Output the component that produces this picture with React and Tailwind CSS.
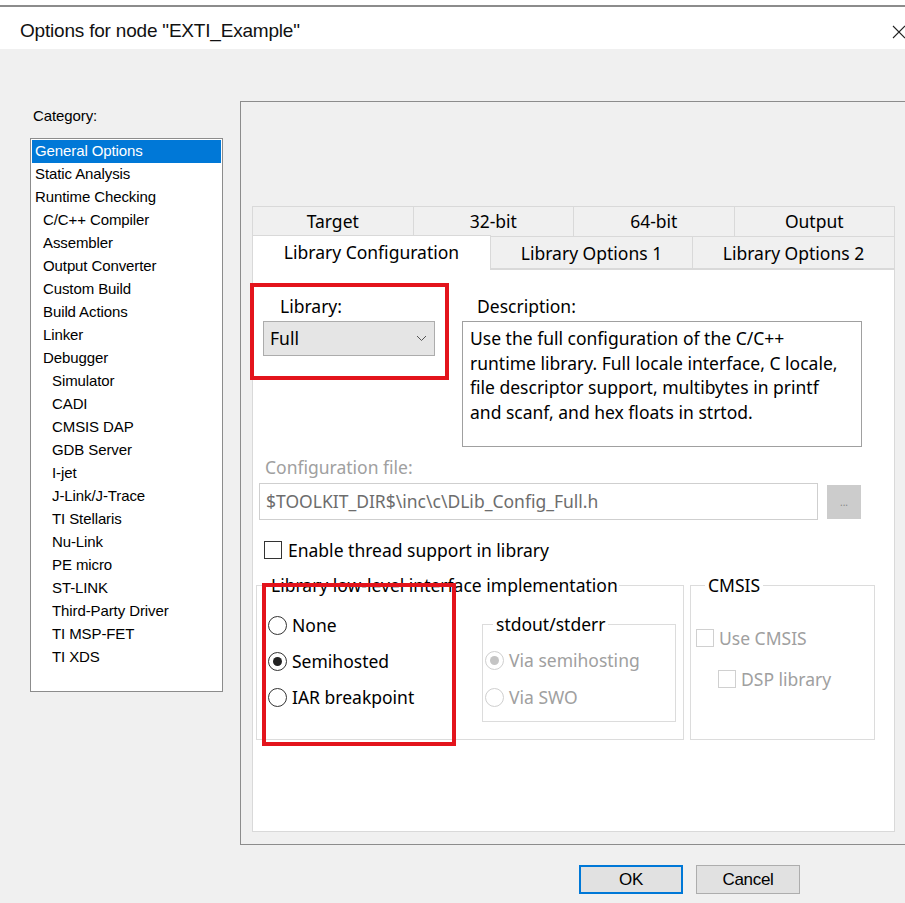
import React from "react";

// Category tree shown in the left list box (level = indent depth)
const categories = [
  { label: "General Options", level: 0, selected: true },
  { label: "Static Analysis", level: 0 },
  { label: "Runtime Checking", level: 0 },
  { label: "C/C++ Compiler", level: 1 },
  { label: "Assembler", level: 1 },
  { label: "Output Converter", level: 1 },
  { label: "Custom Build", level: 1 },
  { label: "Build Actions", level: 1 },
  { label: "Linker", level: 1 },
  { label: "Debugger", level: 1 },
  { label: "Simulator", level: 2 },
  { label: "CADI", level: 2 },
  { label: "CMSIS DAP", level: 2 },
  { label: "GDB Server", level: 2 },
  { label: "I-jet", level: 2 },
  { label: "J-Link/J-Trace", level: 2 },
  { label: "TI Stellaris", level: 2 },
  { label: "Nu-Link", level: 2 },
  { label: "PE micro", level: 2 },
  { label: "ST-LINK", level: 2 },
  { label: "Third-Party Driver", level: 2 },
  { label: "TI MSP-FET", level: 2 },
  { label: "TI XDS", level: 2 },
];

const indent = ["pl-[3px]", "pl-[11px]", "pl-[20px]"];

const topTabs = ["Target", "32-bit", "64-bit", "Output"];

const Radio = ({ checked, disabled }) => (
  <span
    className={`flex h-[19px] w-[19px] shrink-0 items-center justify-center rounded-full border bg-white ${
      disabled ? "border-[#cfcfcf]" : "border-[#333]"
    }`}
  >
    {checked && (
      <span
        className={`h-[9px] w-[9px] rounded-full ${disabled ? "bg-[#c4c4c4]" : "bg-[#222]"}`}
      />
    )}
  </span>
);

const Checkbox = ({ disabled }) => (
  <span
    className={`h-[18px] w-[18px] shrink-0 border bg-white ${
      disabled ? "border-[#d0d0d0]" : "border-[#333]"
    }`}
  />
);

export default function App() {
  return (
    <div className="flex h-[903px] w-[905px] flex-col overflow-hidden bg-[#f0f0f0] font-['Noto_Sans',sans-serif] text-[17.5px] text-black">
      {/* title bar */}
      <div className="h-[5px] bg-white" />
      <div className="flex h-[44px] items-center justify-between border-t-2 border-[#8c8c8c] bg-white pl-[20px] pt-[7px]">
        <span className="font-['Liberation_Sans',sans-serif] text-[19px] tracking-[-0.2px] text-[#111]">
          Options for node "EXTI_Example"
        </span>
        <svg width="16" height="16" viewBox="0 0 16 16" className="-mr-[2px]">
          <path d="M2 2 L14 14 M14 2 L2 14" stroke="#222" strokeWidth="1.1" fill="none" />
        </svg>
      </div>

      <div className="flex flex-1 pl-[30px]">
        {/* category list */}
        <div className="flex w-[193px] shrink-0 flex-col font-['Liberation_Sans',sans-serif] text-[15px] tracking-[-0.1px]">
          <div className="mt-[58px] pl-[3px] leading-[18px]">Category:</div>
          <div className="mt-[13px] h-[554px] border border-[#8c8c8c] bg-white px-[1px] pt-[1px]">
            {categories.map((c) => (
              <div
                key={c.label}
                className={`h-[23px] leading-[22px] ${indent[c.level]} ${
                  c.selected ? "bg-[#0078d7] text-white" : "text-black"
                }`}
              >
                {c.label}
              </div>
            ))}
          </div>
        </div>

        <div className="ml-[17px] flex flex-1 flex-col">
          {/* options frame */}
          <div className="mt-[52px] flex h-[744px] flex-col border border-r-0 border-[#8c8c8c] pl-[11px] pt-[104px]">
            <div className="flex w-[643px] flex-col">
              <div className="flex h-[31px]">
                {topTabs.map((t) => (
                  <div
                    key={t}
                    className="flex flex-1 items-center justify-center border border-l-0 border-[#d9d9d9] first:border-l"
                  >
                    {t}
                  </div>
                ))}
              </div>
              <div className="relative z-10 flex h-[32px] items-stretch">
                <div className="-mt-[2px] mb-[-1px] flex w-[239px] items-center justify-center border border-b-0 border-[#d9d9d9] bg-white pb-[2px]">
                  Library Configuration
                </div>
                <div className="flex w-[202px] items-center justify-center border border-l-0 border-t-0 border-[#d9d9d9] pt-[2px]">
                  Library Options 1
                </div>
                <div className="flex flex-1 items-center justify-center border border-l-0 border-t-0 border-[#d9d9d9] pt-[2px]">
                  Library Options 2
                </div>
              </div>

              {/* tab page */}
              <div className="relative h-[563px] border border-[#d9d9d9] bg-white">
                <div className="mt-[25px] flex">
                  <div className="ml-[10px] flex w-[172px] flex-col">
                    <div className="h-[22px] pl-[17px] leading-[22px]">Library:</div>
                    <div className="mt-[4px] flex h-[35px] items-center justify-between border border-[#acacac] bg-[#e5e5e5] pl-[6px] pr-[7px]">
                      <span>Full</span>
                      <svg width="11" height="7" viewBox="0 0 11 7">
                        <path d="M1 1 L5.5 5.5 L10 1" stroke="#555" strokeWidth="1" fill="none" />
                      </svg>
                    </div>
                  </div>
                  <div className="ml-[27px] flex w-[400px] flex-col">
                    <div className="h-[22px] pl-[15px] leading-[22px]">Description:</div>
                    <div className="mt-[4px] h-[126px] border border-[#a0a0a0] pl-[7px] pt-[4px] leading-[24.5px]">
                      Use the full configuration of the C/C++
                      <br />
                      runtime library. Full locale interface, C locale,
                      <br />
                      file descriptor support, multibytes in printf
                      <br />
                      and scanf, and hex floats in strtod.
                    </div>
                  </div>
                </div>

                <div className="ml-[12px] mt-[9px] h-[22px] leading-[22px] text-[#a0a0a0]">
                  Configuration file:
                </div>
                <div className="ml-[6px] mt-[5px] flex items-center">
                  <div className="flex h-[37px] w-[559px] items-center border border-[#cfcfcf] bg-white pl-[6px] text-[#6d6d6d]">
                    $TOOLKIT_DIR$\inc\c\DLib_Config_Full.h
                  </div>
                  <div className="ml-[9px] flex h-[34px] w-[34px] items-center justify-center bg-[#cccccc] text-[10px] leading-none text-[#888]">
                    ...
                  </div>
                </div>

                <div className="ml-[11px] mt-[19px] flex h-[22px] items-center gap-[6px]">
                  <Checkbox />
                  <span>Enable thread support in library</span>
                </div>

                <div className="ml-[3px] mt-[13px] flex items-start">
                  {/* low-level interface group */}
                  <fieldset className="h-[166px] w-[428px] border border-[#dcdcdc] pl-[11px]">
                    <legend className="ml-[2px] px-[1px] leading-[22px]">
                      Library low-level interface implementation
                    </legend>
                    <div className="flex items-start">
                      <div className="mt-[18px] flex w-[214px] flex-col gap-[14px]">
                        <div className="flex h-[22px] items-center gap-[5px]">
                          <Radio />
                          <span>None</span>
                        </div>
                        <div className="flex h-[22px] items-center gap-[5px]">
                          <Radio checked />
                          <span>Semihosted</span>
                        </div>
                        <div className="flex h-[22px] items-center gap-[5px]">
                          <Radio />
                          <span>IAR breakpoint</span>
                        </div>
                      </div>
                      <fieldset className="mt-[17px] h-[109px] w-[194px] border border-[#dcdcdc] pl-[2px]">
                        <legend className="ml-[8px] px-[3px] leading-[22px]">stdout/stderr</legend>
                        <div className="mt-[14px] flex flex-col gap-[15px] text-[#a0a0a0]">
                          <div className="flex h-[22px] items-center gap-[5px]">
                            <Radio checked disabled />
                            <span>Via semihosting</span>
                          </div>
                          <div className="flex h-[22px] items-center gap-[5px]">
                            <Radio disabled />
                            <span>Via SWO</span>
                          </div>
                        </div>
                      </fieldset>
                    </div>
                  </fieldset>

                  {/* CMSIS group */}
                  <fieldset className="ml-[6px] h-[166px] w-[185px] border border-[#dcdcdc] pl-[5px] text-[#a0a0a0]">
                    <legend className="ml-[9px] px-[3px] leading-[22px] text-black">CMSIS</legend>
                    <div className="mt-[31px] flex h-[22px] items-center gap-[5px]">
                      <Checkbox disabled />
                      <span>Use CMSIS</span>
                    </div>
                    <div className="ml-[22px] mt-[19px] flex h-[22px] items-center gap-[5px]">
                      <Checkbox disabled />
                      <span>DSP library</span>
                    </div>
                  </fieldset>
                </div>

                {/* red highlight boxes */}
                <div className="absolute left-[-3px] top-[13px] h-[97px] w-[199px] border-4 border-[#e3141c]" />
                <div className="absolute left-[9px] top-[313px] h-[163px] w-[194px] border-4 border-[#e3141c]" />
              </div>
            </div>
          </div>

          {/* dialog buttons */}
          <div className="mt-[20px] flex justify-end gap-[13px] pr-[105px] font-['Liberation_Sans',sans-serif] text-[17px] tracking-[-0.3px]">
            <button className="h-[29px] w-[104px] border-2 border-[#0078d7] bg-[#e1e1e1]">OK</button>
            <button className="h-[29px] w-[104px] border border-[#adadad] bg-[#e1e1e1]">Cancel</button>
          </div>
        </div>
      </div>
    </div>
  );
}
